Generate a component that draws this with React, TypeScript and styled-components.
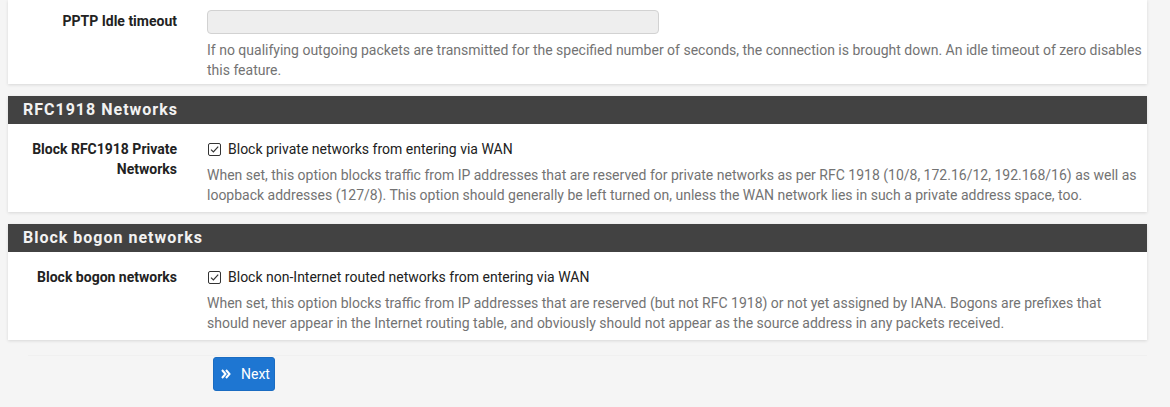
import styled, { createGlobalStyle } from "styled-components";

const GlobalStyle = createGlobalStyle`
    html, body {
        margin: 0;
        padding: 0;
        background: #f5f5f5;
        font-family: Roboto, "Liberation Sans", Arial, sans-serif;
        font-size: 14px;
        color: #212121;
    }
`

type Row = {
    label: string[];
    check?: string;
    input?: boolean;
    help: string;
}

type Section = {
    title?: string;
    rows: Row[];
}

const sections: Section[] = [
    {
        rows: [
            {
                label: ["PPTP Idle timeout"],
                input: true,
                help: "If no qualifying outgoing packets are transmitted for the specified number of seconds, the connection is brought down. An idle timeout of zero disables this feature.",
            },
        ],
    },
    {
        title: "RFC1918 Networks",
        rows: [
            {
                label: ["Block RFC1918 Private", "Networks"],
                check: "Block private networks from entering via WAN",
                help: "When set, this option blocks traffic from IP addresses that are reserved for private networks as per RFC 1918 (10/8, 172.16/12, 192.168/16) as well as loopback addresses (127/8). This option should generally be left turned on, unless the WAN network lies in such a private address space, too.",
            },
        ],
    },
    {
        title: "Block bogon networks",
        rows: [
            {
                label: ["Block bogon networks"],
                check: "Block non-Internet routed networks from entering via WAN",
                help: "When set, this option blocks traffic from IP addresses that are reserved (but not RFC 1918) or not yet assigned by IANA. Bogons are prefixes that should never appear in the Internet routing table, and obviously should not appear as the source address in any packets received.",
            },
        ],
    },
];

const App = () => {
    return (
        <Page>
            <GlobalStyle />
            {sections.map((s, i) => (
                <Panel key={i}>
                    {s.title && <PanelHeading>{s.title}</PanelHeading>}
                    <PanelBody $top={s.title ? 15 : 10} $bottom={s.title ? 7 : 4}>
                        {s.rows.map((r, j) => (
                            <FormRow key={j}>
                                <Label $top={r.input ? 1 : 0}>
                                    {r.label.map((l, k) => (
                                        <div key={k}>{l}</div>
                                    ))}
                                </Label>
                                <Field>
                                    {r.input && <TextInput disabled />}
                                    {r.check && (
                                        <CheckLine>
                                            <CheckBox>
                                                <svg width="11" height="11" viewBox="0 0 11 11">
                                                    <path d="M2 5.6 L4.4 8 L9.2 2.6" fill="none" stroke="#333" strokeWidth="1.2" />
                                                </svg>
                                            </CheckBox>
                                            {r.check}
                                        </CheckLine>
                                    )}
                                    <Help $top={r.input ? 5 : 6}>{r.help}</Help>
                                </Field>
                            </FormRow>
                        ))}
                    </PanelBody>
                </Panel>
            ))}
            <Footer>
                <NextButton>
                    <svg width="10" height="12" viewBox="0 0 10 12">
                        <path d="M1 2 L4.5 6 L1 10 M5 2 L8.5 6 L5 10" fill="none" stroke="#fff" strokeWidth="2" />
                    </svg>
                    Next
                </NextButton>
            </Footer>
        </Page>
    );
}

const Page = styled.div`
    width: 1139px;
    padding-left: 8px;
    padding-bottom: 20px;
`

const Panel = styled.div`
    background: #fff;
    box-shadow: 0 1px 3px rgba(0, 0, 0, 0.12);
    margin-bottom: 12px;
`

const PanelHeading = styled.div`
    height: 28px;
    line-height: 28px;
    background: #424242;
    color: #f2f2f2;
    padding-left: 15px;
    font-size: 16px;
    font-weight: 700;
    letter-spacing: 1px;
`

const PanelBody = styled.div<{ $top: number; $bottom: number }>`
    padding: ${p => p.$top}px 0 ${p => p.$bottom}px;
`

const FormRow = styled.div`
    display: grid;
    grid-template-columns: 169px 1fr;
    column-gap: 30px;
`

const Label = styled.div<{ $top: number }>`
    text-align: right;
    font-weight: 700;
    font-size: 14px;
    line-height: 20px;
    color: #222;
    padding-top: ${p => p.$top}px;
`

const Field = styled.div`
    padding-right: 2px;
`

const TextInput = styled.input`
    display: block;
    box-sizing: border-box;
    width: 452px;
    height: 24px;
    margin: 0 0 6px;
    background: #eee;
    border: 1px solid #d2d2d2;
    border-radius: 4px;
`

const CheckLine = styled.div`
    display: flex;
    align-items: center;
    gap: 7px;
    line-height: 20px;
    color: #212121;
    padding-left: 1px;
`

const CheckBox = styled.span`
    box-sizing: border-box;
    width: 13px;
    height: 13px;
    border: 1px solid #333;
    border-radius: 2px;
    display: inline-flex;
    align-items: center;
    justify-content: center;
    background: #fff;
`

const Help = styled.div<{ $top: number }>`
    margin-top: ${p => p.$top}px;
    font-size: 14px;
    line-height: 20px;
    color: #737373;
`

const Footer = styled.div`
    margin-top: 15px;
    margin-left: 20px;
    border-top: 1px solid #f0f0f0;
    padding-top: 1px;
    padding-left: 185px;
`

const NextButton = styled.button`
    display: inline-flex;
    align-items: center;
    gap: 10px;
    height: 34px;
    padding: 0 4px 0 7px;
    background: #1e76d2;
    color: #fff;
    border: 1px solid #1a6cc2;
    border-radius: 3px;
    font-family: Roboto, "Liberation Sans", Arial, sans-serif;
    font-size: 14px;
`

export default App;
